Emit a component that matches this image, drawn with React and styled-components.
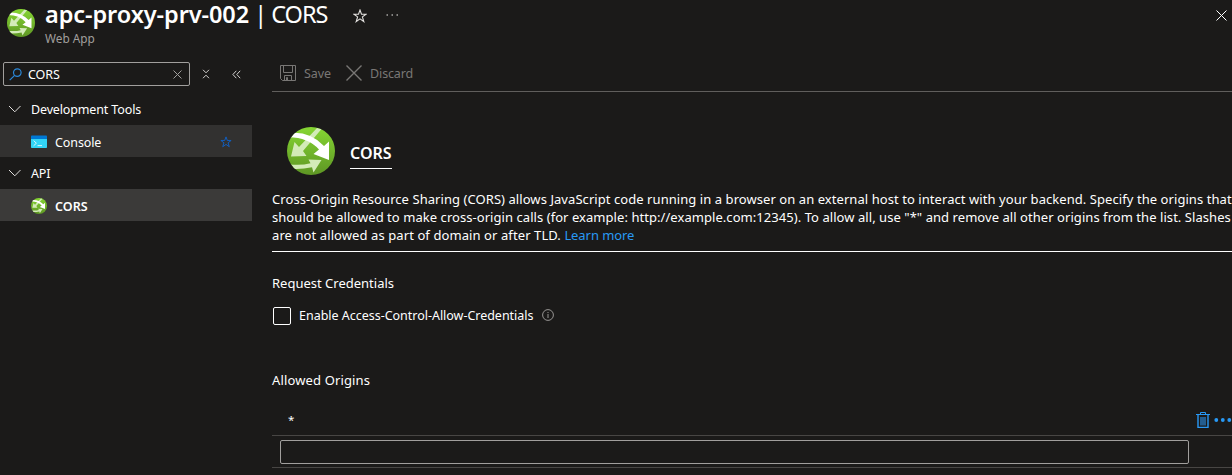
import React from "react";
import styled, { createGlobalStyle } from "styled-components";

const Global = createGlobalStyle`
  * { box-sizing: border-box; }
  html, body { margin: 0; background: #1b1a19; overflow: hidden; }
  body { font-family: "Segoe UI", "Noto Sans", "Open Sans", sans-serif; font-size: 12.5px; color: #fff; }
  svg { display: block; flex: none; }
`;

const Blade = styled.div`
  width: 1232px;
  height: 475px;
  overflow: hidden;
  background: #1b1a19;
`;

const Label = styled.span`
  white-space: nowrap;
  letter-spacing: ${(p) => p.$track || 0}px;
  font-weight: ${(p) => (p.$strong ? 600 : 400)};
  color: ${(p) => p.$color || "#fff"};
`;

const Header = styled.header`
  display: flex;
  height: 58px;
  padding: 0 5px 0 7px;
`;

const HeaderIcon = styled.div`
  padding-top: 9px;
  width: 38px;
`;

const Titles = styled.div`
  width: 308px;
`;

const Title = styled.h1`
  margin: 0;
  height: 31px;
  font-size: 23.5px;
  line-height: 28px;
  font-weight: 400;
  white-space: nowrap;
`;

const Subtitle = styled.div`
  font-size: 11.8px;
  line-height: 15px;
`;

const HeaderActions = styled.div`
  display: flex;
  gap: 19px;
  padding-top: 9px;
`;

const CloseButton = styled.div`
  margin-left: auto;
  padding-top: 10px;
`;

const Body = styled.div`
  display: flex;
`;

const Sidebar = styled.nav`
  width: 252px;
  flex: none;
`;

const SearchRow = styled.div`
  display: flex;
  align-items: center;
  height: 35px;
  padding: 4px 0 7px 3px;
`;

const SearchBox = styled.div`
  display: flex;
  align-items: center;
  width: 187px;
  height: 24px;
  padding: 0 7px 0 5px;
  border: 1px solid #a19f9d;
  border-radius: 2px;
  gap: 6px;

  svg:last-child { margin-left: auto; }
`;

const SearchTools = styled.div`
  display: flex;
  align-items: center;
  gap: 22px;
  padding-left: 12px;
`;

const Group = styled.div`
  display: flex;
  align-items: center;
  height: 32px;
  padding-left: 8px;
  gap: 10px;
`;

const Item = styled.div`
  display: flex;
  align-items: center;
  height: 32px;
  padding: 2px 20px 0 31px;
  gap: 8px;
  background: ${(p) => (p.$selected ? "#3b3a39" : "#323130")};

  svg:nth-child(3) { margin-left: auto; }
`;

const Main = styled.main`
  width: 960px;
  margin-left: 20px;
  flex: none;
`;

const Toolbar = styled.div`
  display: flex;
  align-items: center;
  height: 34px;
  padding: 0 0 2px 8px;
  border-bottom: 1px solid #605e5c;
`;

const Command = styled.div`
  display: flex;
  align-items: center;
  gap: ${(p) => p.$gap}px;
  margin-right: 15px;

  svg { margin-bottom: 1px; }
`;

const Hero = styled.div`
  display: flex;
  padding: 35px 0 0 15px;
  height: 98px;
  gap: 15px;
`;

const HeroTitle = styled.div`
  margin-top: 15px;
  height: 27px;
  border-bottom: 1px solid #fff;
  font-size: 16px;
  line-height: 23px;
`;

const Description = styled.div`
  display: flex;
  flex-direction: column;
  height: 62px;
  border-bottom: 1px solid #fff;
  font-size: 13px;
  line-height: 18px;
`;

const Section = styled.div`
  height: ${(p) => p.$height}px;
  padding-top: ${(p) => p.$top}px;
  font-size: 13px;
  line-height: 18px;
`;

const CheckRow = styled.div`
  display: flex;
  align-items: center;
  height: 18px;
  padding-left: 1px;
`;

const Checkbox = styled.div`
  width: 18px;
  height: 18px;
  margin-right: 8px;
  border: 1px solid #fff;
  border-radius: 2px;
`;

const CheckText = styled.div`
  padding-bottom: 2px;
`;

const Info = styled.div`
  margin: 0 0 2px 9px;
`;

const OriginRow = styled.div`
  display: flex;
  align-items: center;
  height: 32px;
  padding: 0 0 0 ${(p) => (p.$editing ? 8 : 16)}px;
  border-bottom: 1px solid #484644;
`;

const OriginValue = styled.div`
  font-size: 11.5px;
`;

const RowActions = styled.div`
  display: flex;
  align-items: center;
  gap: 4px;
  margin-left: auto;
`;

const OriginInput = styled.div`
  width: 909px;
  height: 24px;
  border: 1px solid #a19f9d;
  border-radius: 2px;
`;

function WebAppIcon({ size, id }) {
  return (
    <svg width={size} height={size} viewBox="0 0 48 48">
      <defs>
        <linearGradient id={id} x1="0" y1="0" x2="0" y2="1">
          <stop offset="0" stopColor="#86d633" />
          <stop offset="1" stopColor="#5e9624" />
        </linearGradient>
        <clipPath id={id + "c"}><circle cx="24" cy="24" r="24" /></clipPath>
      </defs>
      <circle cx="24" cy="24" r="24" fill={`url(#${id})`} />
      <g clipPath={`url(#${id}c)`}>
        <g fill="#d3ebb8">
          <path d="M30 1L34.5 2L16 24L19.5 29L4 29.5L7.5 15L12 20Z" />
          <path d="M3 37.5Q15 38.5 23.5 36.3L21.5 32.5L34.5 33L26.5 45.5L25 40.3Q15 42.5 6 42Z" />
        </g>
        <path fill="#fff" d="M4 6Q23 4.5 37 19L42 14.5V33L26.5 27L32 22.5Q21 10.5 2 10.3Z" />
      </g>
    </svg>
  );
}

const Star = ({ size, color }) => (
  <svg width={size} height={size} viewBox="0 0 14 14" fill="none" stroke={color} strokeWidth="1.1">
    <path d="M7 1L8.5 5.2H13L9.4 7.9L10.8 12.5L7 9.8L3.2 12.5L4.6 7.9L1 5.2H5.5Z" />
  </svg>
);

const Cross = ({ size, color, weight = 1 }) => (
  <svg width={size} height={size} viewBox={`0 0 ${size} ${size}`} stroke={color} strokeWidth={weight}>
    <path d={`M.5 .5L${size - 0.5} ${size - 0.5}M${size - 0.5} .5L.5 ${size - 0.5}`} />
  </svg>
);

const Chevron = () => (
  <svg width="13" height="8" viewBox="0 0 13 8" fill="none" stroke="#e1dfdd">
    <path d="M1 1L6.8 6.8L12.5 1" />
  </svg>
);

const SearchIcon = () => (
  <svg width="13" height="13" viewBox="0 0 13 13" fill="none" stroke="#2b88d8" strokeWidth="1.2">
    <circle cx="8.3" cy="4.6" r="3.8" />
    <path d="M5.6 7.3L.7 12.2" />
  </svg>
);

const CollapseAll = () => (
  <svg width="8" height="10" viewBox="0 0 8 10" fill="none" stroke="#d2d0ce">
    <path d="M1 .8L4 3.8L7 .8M1 9.2L4 6.2L7 9.2" />
  </svg>
);

const DoubleLeft = () => (
  <svg width="9" height="9" viewBox="0 0 9 9" fill="none" stroke="#d2d0ce">
    <path d="M4.3 .8L.9 4.5L4.3 8.2M8.2 .8L4.8 4.5L8.2 8.2" />
  </svg>
);

const ConsoleIcon = () => (
  <svg width="16" height="16" viewBox="0 0 16 16">
    <path fill="#32d4f5" d="M0 5H16V13.2Q16 14 15.2 14H.8Q0 14 0 13.2Z" />
    <path fill="#0078d4" d="M0 5V2.5Q0 1.5 .8 1.5H15.2Q16 1.5 16 2.5V5Z" />
    <path d="M2.6 6.6L5.4 9.2L2.6 11.8M6.5 11.6H11" fill="none" stroke="#d5f6fd" />
  </svg>
);

const SaveIcon = () => (
  <svg width="16" height="16" viewBox="0 0 16 16" fill="none" stroke="#797775">
    <path d="M.5 .5H15.5V15.5H2.5L.5 13.5ZM3.5 .5V7.5H12.5V.5M4.5 15.5V10.5H11.5V15.5M6.5 15V12.5H7.5V15" />
  </svg>
);

const InfoIcon = () => (
  <svg width="12" height="12" viewBox="0 0 12 12" fill="none" stroke="#979593">
    <circle cx="6" cy="6" r="5.4" />
    <path d="M6 5V9M6 3V4.1" />
  </svg>
);

const Trash = () => (
  <svg width="14" height="16" viewBox="0 0 14 16" fill="none" stroke="#2899f5">
    <path d="M0 2.5H14M4.5 2V.5H9.5V2" />
    <path d="M2 3V15.5H12V3" strokeWidth="1.4" />
    <path d="M4 5H10V13.5H4Z" fill="#245d8e" stroke="none" />
  </svg>
);

const Dots = ({ r, pitch, color, width, height }) => (
  <svg width={width} height={height} fill={color}>
    {[0, 1, 2].map((i) => <circle key={i} cx={r + 0.4 + i * pitch} cy={height / 2} r={r} />)}
  </svg>
);

export default function App() {
  return (
    <>
      <Global />
      <Blade>
        <Header>
          <HeaderIcon><WebAppIcon size={28} id="head" /></HeaderIcon>
          <Titles>
            <Title>
              <Label $strong $track={-0.08}>apc-proxy-prv-002</Label>
              <Label $track={-1}> | </Label>
              <Label $track={-1}>CORS</Label>
            </Title>
            <Subtitle><Label $color="#a19f9d">Web App</Label></Subtitle>
          </Titles>
          <HeaderActions>
            <Star size={14} color="#e1dfdd" />
            <Dots r={0.8} pitch={5} color="#d2d0ce" width={13} height={12} />
          </HeaderActions>
          <CloseButton><Cross size={11} color="#fff" /></CloseButton>
        </Header>
        <Body>
          <Sidebar>
            <SearchRow>
              <SearchBox>
                <SearchIcon />
                <Label $track={-0.05}>CORS</Label>
                <Cross size={9} color="#a19f9d" />
              </SearchBox>
              <SearchTools><CollapseAll /><DoubleLeft /></SearchTools>
            </SearchRow>
            <Group><Chevron /><Label $track={-0.14}>Development Tools</Label></Group>
            <Item>
              <ConsoleIcon /><Label $track={-0.1}>Console</Label>
              <Star size={12} color="#1160c4" />
            </Item>
            <Group><Chevron /><Label $track={-0.2}>API</Label></Group>
            <Item $selected>
              <WebAppIcon size={16} id="nav" /><Label $strong $track={0.05}>CORS</Label>
            </Item>
          </Sidebar>
          <Main>
            <Toolbar>
              <Command $gap={8}><SaveIcon /><Label $color="#797775" $track={-0.05}>Save</Label></Command>
              <Command $gap={8}><Cross size={16} color="#797775" weight={1.4} /><Label $color="#797775" $track={-0.15}>Discard</Label></Command>
            </Toolbar>
            <Hero>
              <WebAppIcon size={48} id="hero" />
              <HeroTitle><Label $strong>CORS</Label></HeroTitle>
            </Hero>
            <Description>
              <Label $track={0.063}>Cross-Origin Resource Sharing (CORS) allows JavaScript code running in a browser on an external host to interact with your backend. Specify the origins that</Label>
              <Label $track={0.055}>should be allowed to make cross-origin calls (for example: http://example.com:12345). To allow all, use "*" and remove all other origins from the list. Slashes</Label>
              <Label $track={0.09}>are not allowed as part of domain or after TLD. <Label $color="#2899f5" $track={-0.08}>Learn more</Label></Label>
            </Description>
            <Section $height={55} $top={22}><Label>Request Credentials</Label></Section>
            <CheckRow>
              <Checkbox />
              <CheckText><Label $track={-0.02}>Enable Access-Control-Allow-Credentials</Label></CheckText>
              <Info><InfoIcon /></Info>
            </CheckRow>
            <Section $height={79} $top={46}><Label $track={0.14}>Allowed Origins</Label></Section>
            <OriginRow>
              <OriginValue>*</OriginValue>
              <RowActions>
                <Trash />
                <Dots r={1.9} pitch={6.5} color="#2899f5" width={18} height={16} />
              </RowActions>
            </OriginRow>
            <OriginRow $editing><OriginInput /></OriginRow>
          </Main>
        </Body>
      </Blade>
    </>
  );
}
